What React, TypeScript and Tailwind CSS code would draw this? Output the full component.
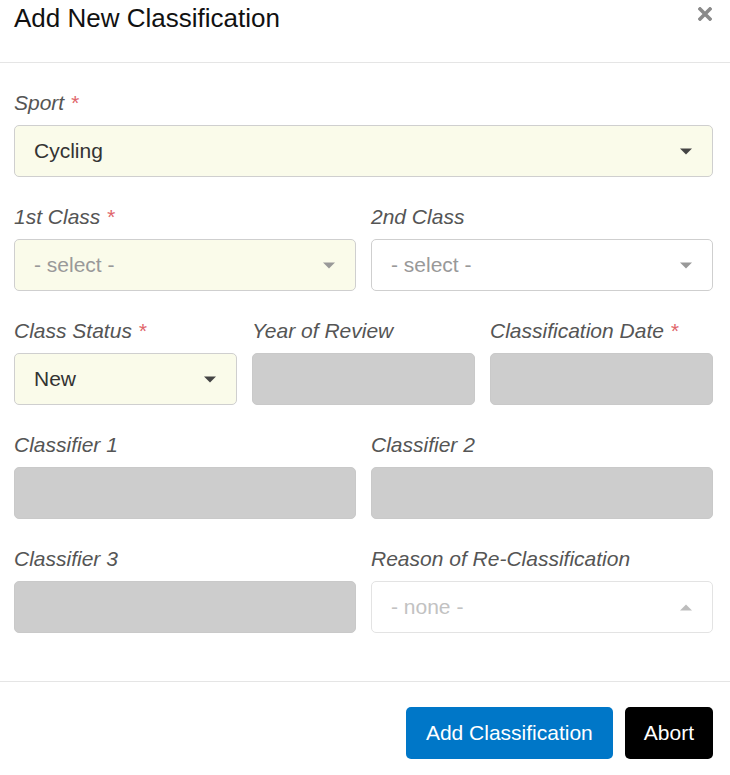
import { FC } from "react";

type Tone = "filled" | "placeholder" | "none";

interface SelectProps {
  value: string;
  tone: Tone;
  required?: boolean;
  up?: boolean;
}

const Select: FC<SelectProps> = ({ value, tone, required, up }) => {
  const bg = required ? "bg-[#fafbea]" : "bg-white";
  const border = tone === "none" ? "border-[#e3e3e3]" : "border-[#cfcfcf]";
  const text =
    tone === "filled"
      ? "text-[#333]"
      : tone === "placeholder"
        ? "text-[#999]"
        : "text-[#c2c2c2]";
  const arrow =
    tone === "filled" ? "#444" : tone === "placeholder" ? "#999" : "#bdbdbd";
  return (
    <div
      className={`flex h-[52px] items-center justify-between rounded-[5px] border ${border} ${bg} pl-[19px] pr-[20px]`}
    >
      <span className={`text-[21px] ${text}`}>{value}</span>
      <svg width="12" height="7" viewBox="0 0 12 7">
        {up ? (
          <path d="M0 6.5 L6 0.5 L12 6.5 Z" fill={arrow} />
        ) : (
          <path d="M0 0.5 L12 0.5 L6 6.5 Z" fill={arrow} />
        )}
      </svg>
    </div>
  );
};

const Disabled: FC = () => (
  <div className="h-[52px] rounded-[5px] border border-[#c9c9c9] bg-[#cdcdcd]" />
);

const Field: FC<{ label: string; required?: boolean; children: React.ReactNode }> = ({
  label,
  required,
  children,
}) => (
  <div className="flex flex-col">
    <label className="mb-[10px] h-[24px] text-[21px] italic leading-[24px] text-[#555]">
      {label}
      {required && <span className="ml-[6px] text-[#e0656a]">*</span>}
    </label>
    {children}
  </div>
);

export default function App() {
  return (
    <div
      className="h-[775px] w-[730px] bg-white"
      style={{ fontFamily: '"Liberation Sans", Arial, sans-serif' }}
    >
      <div className="flex h-[63px] items-start justify-between border-b border-[#e5e5e5] pl-[14px] pr-[18px]">
        <h1 className="pt-[3px] text-[26px] leading-[30px] text-[#111]">Add New Classification</h1>
        <button className="mt-[7px]">
          <svg width="14" height="14" viewBox="0 0 14 14">
            <path d="M2 2 L12 12 M12 2 L2 12" stroke="#8a8a8a" strokeWidth="3.6" strokeLinecap="square" />
          </svg>
        </button>
      </div>

      <div className="flex flex-col gap-[28px] pb-[48px] pl-[14px] pr-[17px] pt-[28px]">
        <Field label="Sport" required>
          <Select value="Cycling" tone="filled" required />
        </Field>

        <div className="grid grid-cols-2 gap-[15px]">
          <Field label="1st Class" required>
            <Select value="- select -" tone="placeholder" required />
          </Field>
          <Field label="2nd Class">
            <Select value="- select -" tone="placeholder" />
          </Field>
        </div>

        <div className="grid grid-cols-3 gap-[15px]">
          <Field label="Class Status" required>
            <Select value="New" tone="filled" required />
          </Field>
          <Field label="Year of Review">
            <Disabled />
          </Field>
          <Field label="Classification Date" required>
            <Disabled />
          </Field>
        </div>

        <div className="grid grid-cols-2 gap-[15px]">
          <Field label="Classifier 1">
            <Disabled />
          </Field>
          <Field label="Classifier 2">
            <Disabled />
          </Field>
        </div>

        <div className="grid grid-cols-2 gap-[15px]">
          <Field label="Classifier 3">
            <Disabled />
          </Field>
          <Field label="Reason of Re-Classification">
            <Select value="- none -" tone="none" up />
          </Field>
        </div>
      </div>

      <div className="flex justify-end gap-[12px] border-t border-[#e5e5e5] pl-[14px] pr-[17px] pt-[25px]">
        <button className="h-[52px] rounded-[5px] bg-[#0077c8] px-[20px] text-[21px] text-white">
          Add Classification
        </button>
        <button className="h-[52px] rounded-[5px] bg-black px-[19px] text-[21px] text-white">
          Abort
        </button>
      </div>
    </div>
  );
}
